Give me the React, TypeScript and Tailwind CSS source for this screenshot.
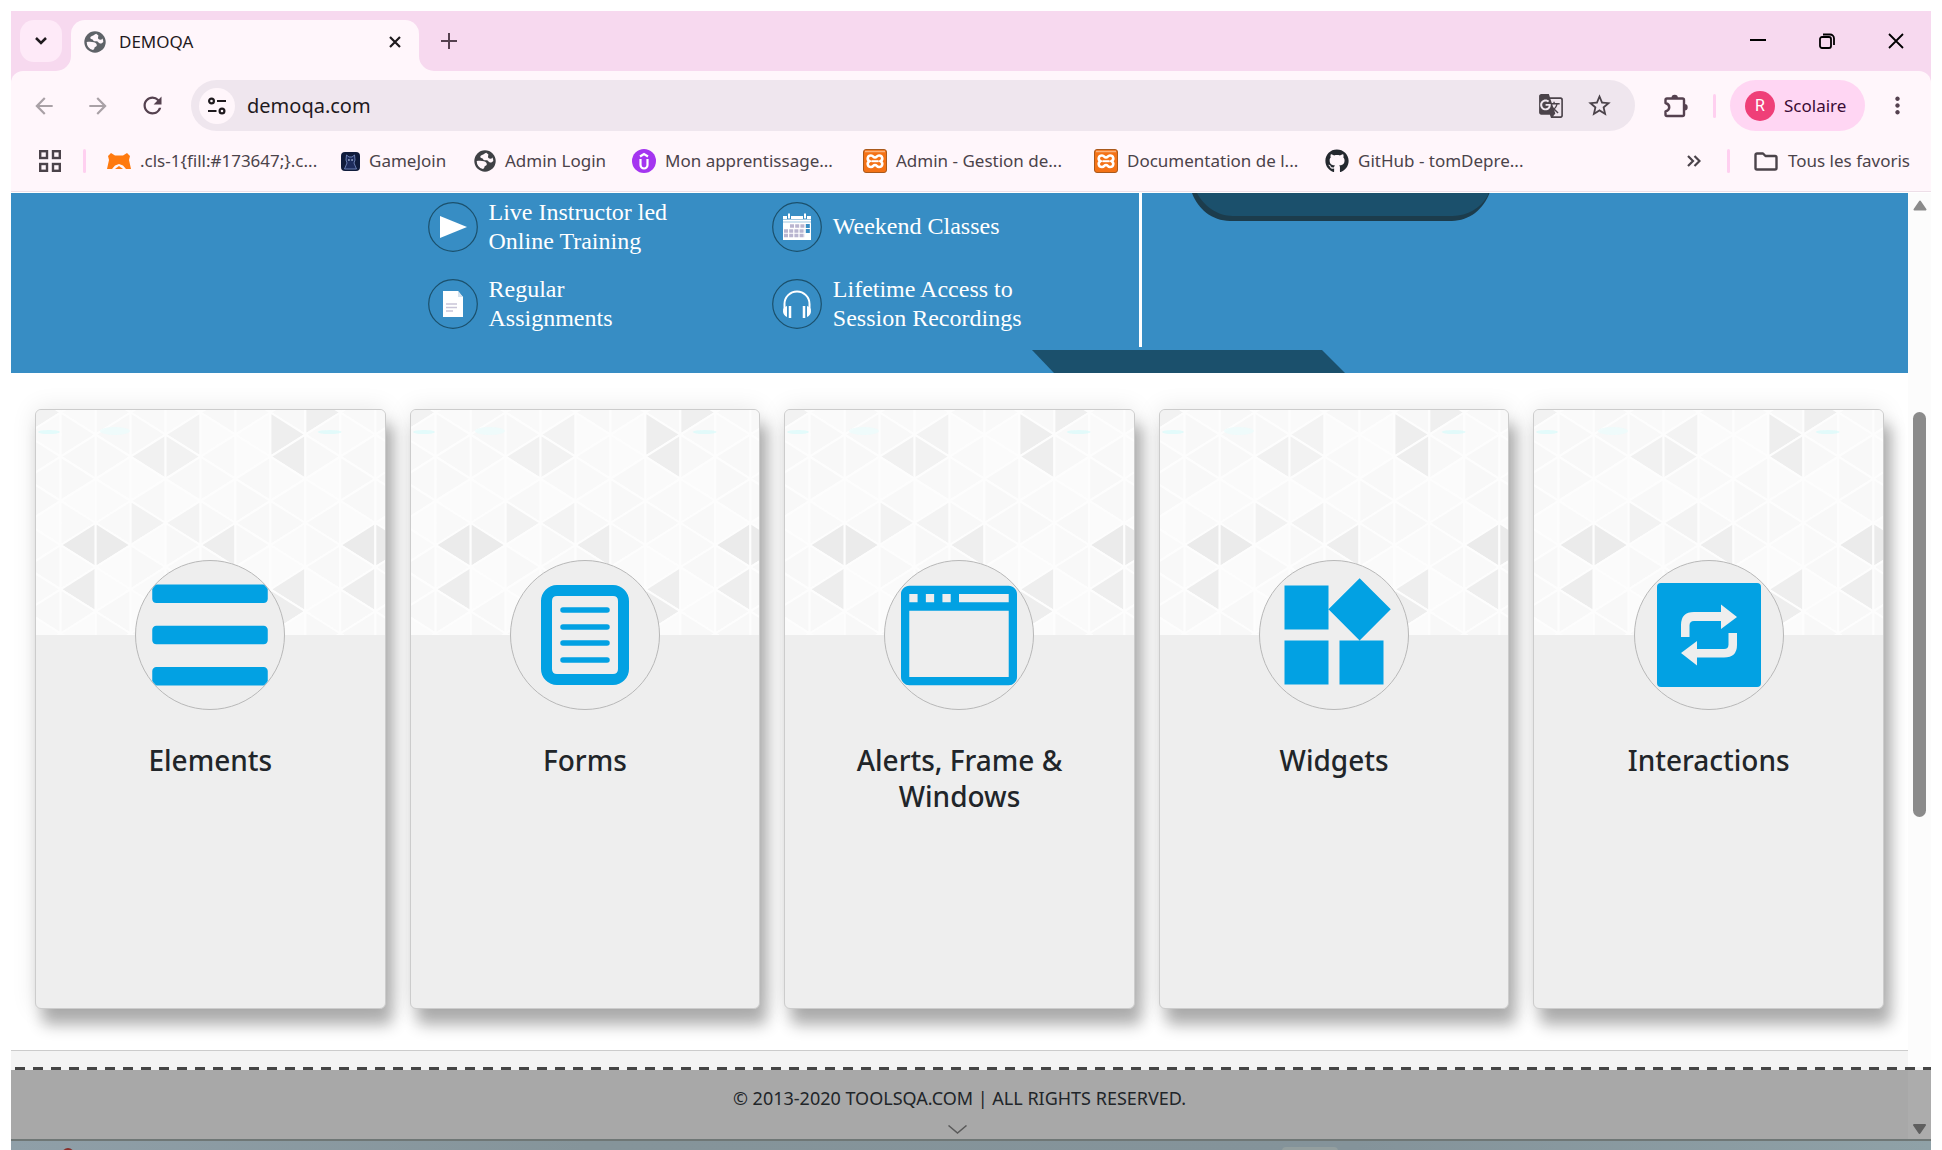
import type { ReactNode } from "react";
import { FaBars, FaGithub } from "react-icons/fa";
import { MdWidgets, MdArrowBack, MdArrowForward, MdRefresh, MdStarBorder, MdMoreVert, MdGTranslate } from "react-icons/md";

const STEP_X = 35;
const HALF_Y = 22.1;

// strip, apex row, direction the apex points, shade
const SHADED: [number, number, "l" | "r", string][] = [
  [4, 2, "l", "#f3f3f3"],
  [3, 3, "l", "#f1f1f1"],
  [4, 3, "r", "#f2f2f2"],
  [7, 2, "r", "#eeeeee"],
  [7, 3, "l", "#eeeeee"],
  [8, 1, "r", "#efefef"],
  [3, 6, "r", "#f2f2f2"],
  [4, 6, "l", "#f3f3f3"],
  [1, 7, "l", "#ebebeb"],
  [2, 7, "r", "#ebebeb"],
  [5, 7, "l", "#eeeeee"],
  [9, 7, "l", "#ebebeb"],
  [10, 7, "r", "#ebebeb"],
  [1, 9, "l", "#ededed"],
  [7, 9, "l", "#eeeeee"],
  [9, 9, "l", "#eeeeee"],
  [7, 10, "r", "#eeeeee"],
  [0, 1, "r", "#f2f2f2"],
];
const SOFT = ["#f8f8f8", "#fafafa", "#f9f9f9", "#fbfbfb", "#f8f8f8"];

function TrianglePattern() {
  const cells: ReactNode[] = [];
  for (let col = 0; col < 11; col++) {
    const x0 = -10.3 + col * STEP_X;
    const x1 = x0 + STEP_X;
    for (let row = -1; row < 13; row++) {
      const y = -19.6 + row * HALF_Y;
      const dir = (col + row) % 2 === 0 ? "l" : "r";
      const apexX = dir === "r" ? x1 : x0;
      const baseX = dir === "r" ? x0 : x1;
      const hit = SHADED.find(([c, r, d]) => c === col && r === row && d === dir);
      const fill = hit ? hit[3] : SOFT[Math.abs(col * 7 + row * 3 + ((col * row) % 4)) % 5];
      cells.push(
        <polygon
          key={`${col}-${row}`}
          points={`${apexX},${y} ${baseX},${y - HALF_Y} ${baseX},${y + HALF_Y}`}
          fill={fill}
          stroke="#fdfdfd"
          strokeWidth="2"
          strokeLinejoin="round"
        />,
      );
    }
  }
  return (
    <svg className="block h-[225px] w-full" viewBox="0 0 349 225" preserveAspectRatio="none" aria-hidden="true">
      {cells}
      <ellipse cx="13" cy="22" rx="11" ry="2" fill="#d9fbfb" opacity=".7" />
      <ellipse cx="79" cy="21" rx="15" ry="4" fill="#ecfbfb" opacity=".8" />
      <ellipse cx="294" cy="22" rx="12" ry="2" fill="#d9fbfb" opacity=".7" />
    </svg>
  );
}

function FormIcon() {
  return (
    <svg viewBox="-66 -66 132 132" width="132" height="132" aria-hidden="true">
      <path
        fillRule="evenodd"
        d="M-28-50H28A16 16 0 0 1 44-34V34A16 16 0 0 1 28 50H-28A16 16 0 0 1-44 34V-34A16 16 0 0 1-28-50ZM-28-39Q-33-39-33-34V34Q-33 39-28 39H28Q33 39 33 34V-34Q33-39 28-39Z"
      />
      <path d="M-22-25H22M-22-8H22M-22 8H22M-22 25H22" stroke="currentColor" strokeWidth="5.5" strokeLinecap="round" />
    </svg>
  );
}

function BrowserIcon() {
  return (
    <svg viewBox="0 0 14 16" width="116" height="133" aria-hidden="true">
      <path d="M5 3h1v1H5V3zM3 3h1v1H3V3zM1 3h1v1H1V3zm12 10H1V5h12v8zm0-9H7V3h6v1zm1-1c0-.55-.45-1-1-1H1c-.55 0-1 .45-1 1v10c0 .55.45 1 1 1h12c.55 0 1-.45 1-1V3z" />
    </svg>
  );
}

function LoopIcon() {
  return (
    <svg viewBox="-66 -66 132 132" width="132" height="132" aria-hidden="true">
      <rect x="-52" y="-52" width="104" height="104" rx="4" />
      <path
        fill="#eeeeee"
        d="M-28 2V-10Q-28-23-15-23H12V-30.500L28-18 12-6V-14H-15Q-19.500-14-19.500-9.500V2ZM28-2V10Q28 22.500 15 22.500H-12V30.500L-28 18-12 6V14H15Q19.500 14 19.500 9.500V-2Z"
      />
    </svg>
  );
}

const CARDS = [
  { title: "Elements", icon: <FaBars size={132} /> },
  { title: "Forms", icon: <FormIcon /> },
  { title: "Alerts, Frame & Windows", icon: <BrowserIcon /> },
  { title: "Widgets", icon: <MdWidgets size={132} /> },
  { title: "Interactions", icon: <LoopIcon /> },
];

function Card({ title, icon }: { title: string; icon: ReactNode }) {
  return (
    <a
      href="#"
      className="flex h-[600px] min-w-0 flex-col rounded-md border border-[#cccccc] bg-[#eeeeee] text-center shadow-[7px_16px_15px_rgba(0,0,0,0.3),0_0_24px_rgba(0,0,0,0.1)]"
    >
      <div className="overflow-hidden rounded-t-[5px]">
        <TrianglePattern />
      </div>
      <div className="relative mx-auto -mt-[75px] flex size-[150px] items-center justify-center overflow-hidden rounded-full border border-[#b8b8b8] bg-[#eeeeee] fill-current text-[#02a1e3]">
        {icon}
      </div>
      <h5 className="mt-8 px-10 text-[28px] leading-9 font-medium text-[#212529]">{title}</h5>
    </a>
  );
}

function GlobeIcon({ color, size }: { color: string; size: number }) {
  return (
    <svg viewBox="0 0 22 22" width={size} height={size} aria-hidden="true">
      <circle cx="11" cy="11" r="10.700" fill={color} />
      <path
        d="M12.500 2.700C10 3.200 10 4.500 8 5c-1.500.500-2 1.500-1.500 2.500S9 8 9.500 9.500c.300 1.200 2 .500 3.500.800 1.500.300 1.500 2 3 2.200 1.500.200 2.500-.500 3.300-1.500a8.300 8.300 0 0 0-.800-3.500C17 8 15.500 8.500 14.500 7.500c-1-1.200.500-2 0-3C14 3.700 13 4 12.500 2.700z"
        fill="#fff6fb"
      />
      <path d="M2.700 11c2.500-.500 5-.500 7.300.300 1.800.700 3 1.700 2.800 3.200-.200 1.300-2 1-2.300 2.200-.200 1-.500 1.800-1.500 2.300A8.400 8.400 0 0 1 2.700 11z" fill="#fff6fb" />
      <path d="M14.500 4c1.500.500 3.300 2 4 3.700-1 1.300-3 1.300-4 .300-1-1.300.500-2 0-4z" fill={color} />
    </svg>
  );
}

function XamppIcon() {
  return (
    <svg viewBox="0 0 24 24" width="24" height="24" aria-hidden="true">
      <rect x=".5" y=".5" width="23" height="23" rx="2.500" fill="#f47216" stroke="#a9591c" />
      <path d="M2 2.500h20" stroke="#f9b27c" strokeWidth="1.500" />
      <path
        d="M8 6.500c2.500 0 2 2 4 2s1.500-2 4-2c3.500 0 4.500 4 1.500 5.700 3 1.800 2 5.800-1.500 5.800-2.500 0-2-2-4-2s-1.500 2-4 2c-3.500 0-4.500-4-1.500-5.800C3.500 10.500 4.500 6.500 8 6.500z"
        fill="none"
        stroke="#fff"
        strokeWidth="2.600"
      />
      <path d="M8.500 12.200h7" fill="none" stroke="#fff" strokeWidth="2" />
    </svg>
  );
}

const BOOKMARKS = [
  {
    label: ".cls-1{fill:#173647;}.c...",
    width: "w-[234px]",
    icon: (
      <svg viewBox="0 0 24 16" width="24" height="16" aria-hidden="true">
        <path d="M1 3 4 0l4 2.500h8L20 0l3 3-1 4 2 9h-5l-3-3.500-4-1.500-4 1.500L5 16H0L2 7z" fill="#ff7a0f" />
        <path d="M8 16l4-3 4 3z" fill="#ff7a0f" />
      </svg>
    ),
  },
  {
    label: "GameJoin",
    width: "w-[133px]",
    icon: (
      <svg viewBox="0 0 19 19" width="19" height="19" aria-hidden="true">
        <rect width="19" height="19" rx="4" fill="#101c3c" />
        <path d="M5 8 5.500 3l2.500 2h3l2.500-2 .500 5-1 3 2.500 6h-12L6 11z" fill="#1d2c5c" stroke="#8aa0d8" strokeWidth=".7" />
        <path d="M7 8h1.800M10.200 8H12" stroke="#cfe3ff" strokeWidth="1.200" />
      </svg>
    ),
  },
  { label: "Admin Login", width: "w-[158px]", icon: <GlobeIcon size={22} color="#3f4145" /> },
  {
    label: "Mon apprentissage...",
    width: "w-[231px]",
    icon: (
      <svg viewBox="0 0 24 24" width="24" height="24" aria-hidden="true">
        <circle cx="12" cy="12" r="12" fill="#a435f0" />
        <path d="M8 7.500 12 5l4 2.500M8.500 10v6a3.500 3.500 0 0 0 7 0v-6" fill="none" stroke="#fff" strokeWidth="2.200" />
      </svg>
    ),
  },
  { label: "Admin - Gestion de...", width: "w-[231px]", icon: <XamppIcon /> },
  { label: "Documentation de l...", width: "w-[231px]", icon: <XamppIcon /> },
  { label: "GitHub - tomDepre...", width: "w-[231px]", icon: <FaGithub size={24} color="#24292f" /> },
];

function TabStrip() {
  return (
    <div className="flex h-[60px] items-center bg-[#f7d9ef] pl-[9px]">
      <button aria-label="Search tabs" className="flex size-[42px] items-center justify-center rounded-[14px] bg-[#feeaf8]">
        <svg width="12" height="8" viewBox="0 0 12 8" fill="none" stroke="#1f1a1e" strokeWidth="2.500" aria-hidden="true">
          <path d="M1 1l5 5 5-5" />
        </svg>
      </button>
      <div className="relative ml-[9px] flex h-[51px] w-[348px] items-center self-end rounded-t-[14px] bg-[#fff6fb] pr-[18px] pb-2 pl-[13px]">
        <svg className="absolute bottom-0 -left-[15px]" width="15" height="15" viewBox="0 0 15 15" aria-hidden="true">
          <path d="M15 0v15H0A15 15 0 0 0 15 0z" fill="#fff6fb" />
        </svg>
        <svg className="absolute -right-[15px] bottom-0" width="15" height="15" viewBox="0 0 15 15" aria-hidden="true">
          <path d="M0 0v15h15A15 15 0 0 1 0 0z" fill="#fff6fb" />
        </svg>
        <GlobeIcon size={22} color="#5f6368" />
        <span className="ml-[13px] flex-1 text-[17px] text-[#1f1a1e]">DEMOQA</span>
        <button aria-label="Close tab">
          <svg width="12" height="12" viewBox="0 0 12 12" stroke="#1f1a1e" strokeWidth="2.200" aria-hidden="true">
            <path d="M1 1l10 10M11 1L1 11" />
          </svg>
        </button>
      </div>
      <button aria-label="New tab" className="ml-[22px]">
        <svg width="16" height="16" viewBox="0 0 16 16" stroke="#55414f" strokeWidth="2" aria-hidden="true">
          <path d="M8 0v16M0 8h16" />
        </svg>
      </button>
      <div className="mr-[27px] ml-auto flex items-center gap-[53px]">
        <button aria-label="Minimize">
          <svg width="16" height="16" viewBox="0 0 16 16" stroke="#000" strokeWidth="2" aria-hidden="true">
            <path d="M0 7h16" />
          </svg>
        </button>
        <button aria-label="Restore">
          <svg width="16" height="16" viewBox="0 0 16 16" fill="none" stroke="#000" strokeWidth="1.800" aria-hidden="true">
            <rect x="1" y="4" width="11" height="11" rx="2" />
            <path d="M4 1.500h7a4 4 0 0 1 4 4V12" />
          </svg>
        </button>
        <button aria-label="Close window">
          <svg width="16" height="16" viewBox="0 0 16 16" stroke="#000" strokeWidth="1.800" aria-hidden="true">
            <path d="M1 1l14 14M15 1L1 15" />
          </svg>
        </button>
      </div>
    </div>
  );
}

function Toolbar() {
  return (
    <div className="bg-[#f7d9ef]">
      <div className="flex h-[69px] items-center rounded-t-xl bg-[#fff6fb] pr-[20px] pl-[20px]">
        <div className="flex items-center gap-[28px]">
          <button aria-label="Back"><MdArrowBack size={26} color="#a9a1a6" /></button>
          <button aria-label="Forward"><MdArrowForward size={26} color="#a9a1a6" /></button>
          <button aria-label="Reload"><MdRefresh size={27} color="#55414f" /></button>
        </div>
        <div className="ml-[25px] flex h-[51px] flex-1 items-center rounded-full bg-[#efe6ee] pr-[22px] pl-2">
          <button aria-label="Site information" className="flex size-9 items-center justify-center rounded-full bg-[#fff6fb]">
            <svg width="18" height="18" viewBox="0 0 18 18" fill="none" stroke="#1f1a1e" strokeWidth="2.200" aria-hidden="true">
              <circle cx="3.500" cy="4" r="2.400" />
              <path d="M9 4h9M0 14h8.500" />
              <circle cx="14" cy="14" r="2.400" />
            </svg>
          </button>
          <input aria-label="Address" defaultValue="demoqa.com" className="ml-3 min-w-0 flex-1 bg-transparent text-[20px] text-[#1f1a1e] outline-none" />
          <div className="flex items-center gap-[22px]">
            <button aria-label="Translate"><MdGTranslate size={26} color="#4b434a" /></button>
            <button aria-label="Bookmark this tab"><MdStarBorder size={27} color="#4b434a" /></button>
          </div>
        </div>
        <button aria-label="Extensions" className="ml-[28px]">
          <svg width="26" height="26" viewBox="0 0 26 26" aria-hidden="true">
            <path
              d="M4 5.500H19.500A1.500 1.500 0 0 1 21 7V21.500A1.500 1.500 0 0 1 19.500 23H4A1.500 1.500 0 0 1 2.500 21.500V18.500C7.500 17 7.500 11.500 2.500 10V7A1.500 1.500 0 0 1 4 5.500Z"
              fill="none"
              stroke="#55414f"
              strokeWidth="2.400"
              strokeLinejoin="round"
            />
            <path d="M8.500 5a3.200 3.200 0 0 1 6.400 0zM21.500 11a3.200 3.200 0 0 1 0 6.400z" fill="#55414f" />
          </svg>
        </button>
        <div className="ml-[24px] h-6 w-[3px] rounded bg-[#ffd0f0]" />
        <button className="ml-[14px] flex h-[51px] w-[135px] items-center rounded-full bg-[#ffd6f3] pl-[15px]">
          <span className="flex size-[30px] items-center justify-center rounded-full bg-[#ef3f78] font-['Roboto'] text-[16px] text-white">R</span>
          <span className="ml-[9px] text-[17px] text-[#3a0b33]">Scolaire</span>
        </button>
        <button aria-label="Menu" className="ml-[19px]"><MdMoreVert size={27} color="#55414f" /></button>
      </div>
    </div>
  );
}

function BookmarkBar() {
  return (
    <div className="border-b border-[#eddfe8] bg-[#fff6fb] pb-[9px]">
      <div className="flex h-[42px] items-center pr-[21px] pl-7 text-[17px] whitespace-nowrap text-[#4b434a]">
        <button aria-label="Apps">
          <svg width="22" height="22" viewBox="0 0 22 22" fill="none" stroke="#4b434a" strokeWidth="2.400" aria-hidden="true">
            <rect x="1.200" y="1.200" width="6.800" height="6.800" />
            <rect x="14" y="1.200" width="6.800" height="6.800" />
            <rect x="1.200" y="14" width="6.800" height="6.800" />
            <rect x="14" y="14" width="6.800" height="6.800" />
          </svg>
        </button>
        <div className="mr-[21px] ml-[22px] h-6 w-[3px] rounded bg-[#ffd0f0]" />
        {BOOKMARKS.map((b) => (
          <a key={b.label} href="#" className={`flex shrink-0 items-center gap-[9px] ${b.width}`}>
            {b.icon}
            <span>{b.label}</span>
          </a>
        ))}
        <button aria-label="More bookmarks" className="ml-auto">
          <svg width="14" height="12" viewBox="0 0 14 12" fill="none" stroke="#4b434a" strokeWidth="2.200" aria-hidden="true">
            <path d="M1 1l5 5-5 5M7.500 1l5 5-5 5" />
          </svg>
        </button>
        <div className="mr-6 ml-[26px] h-6 w-[3px] rounded bg-[#ffd0f0]" />
        <a href="#" className="flex items-center gap-[10px]">
          <svg width="24" height="19" viewBox="0 0 24 19" fill="none" stroke="#4b434a" strokeWidth="2.400" strokeLinejoin="round" aria-hidden="true">
            <path d="M1.500 16V3a1.500 1.500 0 0 1 1.500-1.500h6L11.500 4H21a1.500 1.500 0 0 1 1.500 1.500V16a1.500 1.500 0 0 1-1.500 1.500H3A1.500 1.500 0 0 1 1.500 16z" />
          </svg>
          <span>Tous les favoris</span>
        </a>
      </div>
    </div>
  );
}

function Feature({ icon, lines }: { icon: ReactNode; lines: string[] }) {
  return (
    <div className="flex h-[77px] items-center gap-[11px]">
      <svg width="50" height="50" viewBox="-25 -25 50 50" fill="#fff" aria-hidden="true">
        <circle r="24.300" fill="none" stroke="#1b506c" strokeWidth="1.200" />
        {icon}
      </svg>
      <p>
        {lines.map((line) => (
          <span key={line} className="block">{line}</span>
        ))}
      </p>
    </div>
  );
}

function Banner() {
  return (
    <section className="relative flex h-[180px] justify-center overflow-hidden bg-[#378dc4] font-['Liberation_Serif',serif] text-[24px] leading-[29px] text-white">
      <div className="flex w-[1064px] items-start">
        <div className="-mt-[5px] w-[346px]">
          <Feature lines={["Live Instructor led", "Online Training"]} icon={<path d="M-13-11 14 0-13 11z" />} />
          <Feature
            lines={["Regular", "Assignments"]}
            icon={
              <>
                <path d="M-10-13H5L10-7V13H-10z" />
                <path d="M5-13v6h5" fill="#d5e3ef" />
                <path d="M-7 0H4M-7 3.500H4M-7 7H0" stroke="#c9c5d8" strokeWidth="1.300" />
              </>
            }
          />
        </div>
        <div className="-mt-[5px] w-[369px]">
          <Feature
            lines={["Weekend Classes"]}
            icon={
              <>
                <path d="M-14-11H14V13H-14z" />
                <path d="M-14-7.500H14M-14-5H14" stroke="#9fc6e0" />
                <path d="M-8-13V-8M8-13V-8" stroke="#378dc4" strokeWidth="4" />
                <path d="M-8-13.500V-8.500M8-13.500V-8.500" stroke="#fff" strokeWidth="2" />
                <path d="M-7-1H8M-13 4H8M-13 8.500H8" stroke="#b9b5d0" strokeWidth="3.500" strokeDasharray="4 1.200" />
                <path d="M10.800-3V6" stroke="#378dc4" strokeWidth="4" strokeDasharray="4 1" />
              </>
            }
          />
          <Feature
            lines={["Lifetime Access to", "Session Recordings"]}
            icon={
              <>
                <path d="M-12.500 6V0a12.500 12.500 0 0 1 25 0v6" fill="none" stroke="#fff" strokeWidth="2" />
                <path d="M-10 2v11q-4-2-4-6t4-5zM10 2v11q4-2 4-6t-4-5z" />
                <path d="M-7 2v12M7 2v12" stroke="#fff" strokeWidth="2.500" />
              </>
            }
          />
        </div>
        <div className="h-[154px] w-[3px] bg-white" />
        <svg className="ml-12" width="303" height="28" viewBox="0 0 303 28" aria-hidden="true">
          <path d="M2 0C8 16 22 28 40 28H263C281 28 295 16 301 0z" fill="#1c3c4c" />
          <path d="M7 0C14 13 27 23 43 23H264C279 23 292 15 299 3L300 0z" fill="#1b506c" />
        </svg>
      </div>
      <svg className="absolute bottom-0 left-1/2 ml-[72px]" width="313" height="23" viewBox="0 0 313 23" aria-hidden="true">
        <path d="M0 0H290L313 23H22z" fill="#1b506c" />
      </svg>
    </section>
  );
}

function Scrollbar() {
  return (
    <div className="flex w-[23px] flex-col items-center bg-[#fcfcfc] pt-[7px]">
      <svg width="14" height="11" viewBox="0 0 14 11" aria-hidden="true">
        <path d="M7 1.500 12.500 9.500H1.500z" fill="#8b8b8b" stroke="#8b8b8b" strokeWidth="2" strokeLinejoin="round" />
      </svg>
      <div className="mt-[201px] h-[405px] w-[13px] rounded-full bg-[#8b8b8b]" />
    </div>
  );
}

function PageFooter() {
  return (
    <footer>
      <div className="h-[3px] bg-[#f4f4f4] bg-[repeating-linear-gradient(90deg,transparent_0_4px,#454545_4px_14px,transparent_14px_18px)]" />
      <div className="flex h-[69px] bg-[#a8a8a8]">
        <div className="flex flex-1 flex-col items-center pt-[14px]">
          <p className="text-[18px] leading-7 text-[#212529]">© 2013-2020 TOOLSQA.COM | ALL RIGHTS RESERVED.</p>
          <svg className="mt-[13px] mr-1" width="19" height="9" viewBox="0 0 19 9" fill="none" stroke="#5a5a5a" strokeWidth="1.500" aria-hidden="true">
            <path d="M.500.500l9 7.500 9-7.500" />
          </svg>
        </div>
        <div className="flex w-[23px] items-end justify-center bg-[#acacac] pb-1">
          <svg width="15" height="12" viewBox="0 0 15 12" aria-hidden="true">
            <path d="M7.500 10 2 2h11z" fill="#5f5f5f" stroke="#5f5f5f" strokeWidth="2" strokeLinejoin="round" />
          </svg>
        </div>
      </div>
      <div className="relative h-[11px] overflow-hidden border-t-2 border-[#6f7776] bg-[linear-gradient(90deg,#8f9fa8,#85949a_30%,#84939a_70%,#8fa1a7)]">
        <span className="absolute top-[7px] left-[51px] h-3 w-3 rounded-full bg-[#8a2f2a]" />
        <span className="absolute top-[6px] left-[1271px] h-3 w-[56px] rounded bg-[#949f9f]" />
      </div>
    </footer>
  );
}

export default function App() {
  return (
    <div className="min-h-screen bg-white px-[11px] pt-[11px] font-['Noto_Sans','Open_Sans',sans-serif]">
      <header className="pb-px">
        <TabStrip />
        <Toolbar />
        <BookmarkBar />
      </header>
      <div className="flex">
        <main className="min-w-0 flex-1">
          <Banner />
          <div className="grid grid-cols-5 gap-6 px-6 pt-9 pb-[41px]">
            {CARDS.map((card) => (
              <Card key={card.title} {...card} />
            ))}
          </div>
          <div className="h-[17px] border-t border-[#cccccc] bg-[#f4f4f4]" />
        </main>
        <Scrollbar />
      </div>
      <PageFooter />
    </div>
  );
}
